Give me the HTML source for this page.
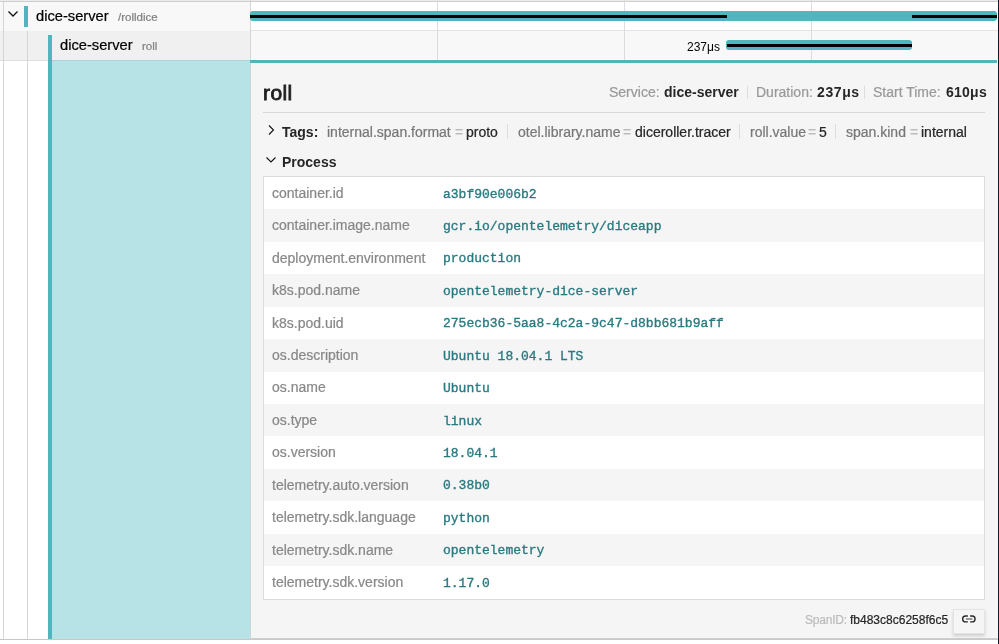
<!DOCTYPE html>
<html><head><meta charset="utf-8"><style>
html,body{margin:0;padding:0;}
body{width:999px;height:644px;position:relative;overflow:hidden;background:#fff;font-family:'Liberation Sans', sans-serif;}
.r{position:absolute;}
.t{position:absolute;white-space:nowrap;line-height:1;will-change:transform;}
.lab{color:#999;}
.sep{display:inline-block;width:1px;height:14px;background:#ddd;margin:0 8px;vertical-align:-2px;}
.ti{margin-left:9.8px;padding-right:8px;border-right:1px solid #ddd;}
.ti.last{border-right:none;padding-right:0;}
.tk{color:#777;}
.td{color:#bbb;padding:0 2.8px;}
</style></head><body>
<div class="r" style="left:0px;top:0px;width:998px;height:1px;background:#ebebeb;"></div>
<div class="r" style="left:0px;top:1px;width:998px;height:1px;background:#cfcfcf;"></div>
<div class="r" style="left:0px;top:2px;width:250px;height:29px;background:#f8f8f8;"></div>
<div class="r" style="left:251px;top:2px;width:747px;height:28px;background:#ffffff;"></div>
<div class="r" style="left:251px;top:30px;width:747px;height:1px;background:#e2e2e2;"></div>
<div class="r" style="left:0px;top:31px;width:250px;height:29px;background:#f0f0f0;"></div>
<div class="r" style="left:251px;top:31px;width:747px;height:28px;background:#f8f8f8;"></div>
<div class="r" style="left:251px;top:59px;width:747px;height:1px;background:#ffffff;"></div>
<div class="r" style="left:0px;top:60px;width:48px;height:579px;background:#ffffff;"></div>
<div class="r" style="left:52px;top:60px;width:198px;height:579px;background:#b8e3e6;"></div>
<div class="r" style="left:0px;top:60px;width:48px;height:1px;background:#dedede;"></div>
<div class="r" style="left:52px;top:60px;width:198px;height:1px;background:#a9d3d7;"></div>
<div class="r" style="left:3px;top:2px;width:1px;height:637px;background:#d6d6d6;"></div>
<div class="r" style="left:27px;top:31px;width:1px;height:608px;background:#d6d6d6;"></div>
<div class="r" style="left:250px;top:0px;width:1px;height:60px;background:#d6d6d6;"></div>
<div class="r" style="left:437px;top:0px;width:1px;height:60px;background:#dcdcdc;"></div>
<div class="r" style="left:624px;top:0px;width:1px;height:60px;background:#dcdcdc;"></div>
<div class="r" style="left:811px;top:0px;width:1px;height:60px;background:#dcdcdc;"></div>
<div class="r" style="left:24px;top:6px;width:4px;height:21px;background:#52b4bd;"></div>
<div class="r" style="left:48px;top:35px;width:4px;height:604px;background:#52b4bd;"></div>
<div class="r" style="left:250px;top:11px;width:747px;height:10px;background:#52b4bd;border-radius:3px;"></div>
<div class="r" style="left:250px;top:15px;width:477px;height:3px;background:#000;"></div>
<div class="r" style="left:912px;top:15px;width:85px;height:3px;background:#000;"></div>
<div class="r" style="left:726px;top:40px;width:186px;height:10px;background:#52b4bd;border-radius:3px;"></div>
<div class="r" style="left:727px;top:44px;width:185px;height:3px;background:#000;"></div>
<svg class="r" style="left:7px;top:9px" width="12" height="10" viewBox="0 0 12 10"><path d="M1.5 2.5 L6 7 L10.5 2.5" fill="none" stroke="#111" stroke-width="1.3"/></svg>
<div class="t" style="left:36.3px;top:9.46px;font-size:14.7px;color:#000;font-weight:normal;font-family:'Liberation Sans', sans-serif;-webkit-text-stroke:0.22px #000;">dice-server</div>
<div class="t" style="left:118px;top:12.17px;font-size:11.5px;color:#808080;font-weight:normal;font-family:'Liberation Sans', sans-serif;-webkit-text-stroke:0.22px #808080;">/rolldice</div>
<div class="t" style="left:60.1px;top:38.16px;font-size:14.7px;color:#000;font-weight:normal;font-family:'Liberation Sans', sans-serif;-webkit-text-stroke:0.22px #000;">dice-server</div>
<div class="t" style="left:141.5px;top:40.87px;font-size:11.5px;color:#808080;font-weight:normal;font-family:'Liberation Sans', sans-serif;-webkit-text-stroke:0.22px #808080;">roll</div>
<div class="t" style="right:279px;top:40.84px;font-size:12px;color:#000;font-weight:normal;">237μs</div>
<div class="r" style="left:250px;top:60px;width:747px;height:579px;background:#f5f5f5;"></div>
<div class="r" style="left:250px;top:60px;width:747px;height:3px;background:#52b4bd;"></div>
<div class="r" style="left:250px;top:63px;width:1px;height:576px;background:#d3d3d3;"></div>
<div class="r" style="left:997px;top:60px;width:1px;height:579px;background:#f7f7f7;"></div>
<div class="r" style="left:250px;top:638px;width:747px;height:1px;background:#cfcfcf;"></div>
<div class="r" style="left:0px;top:639px;width:998px;height:1px;background:#c8c8c8;"></div>
<div class="r" style="left:998px;top:0px;width:1px;height:644px;background:#10182a;"></div>
<div class="t" style="left:262.8px;top:82.22px;font-size:21px;color:#1f1f1f;font-weight:normal;font-family:'Liberation Sans', sans-serif;-webkit-text-stroke:0.85px #1f1f1f;letter-spacing:0.4px;">roll</div>
<div class="t" style="left:609px;top:84.55px;font-size:14px;color:#999;font-weight:normal;font-family:'Liberation Sans', sans-serif;-webkit-text-stroke:0.22px #999;">Service:</div>
<div class="t" style="left:664px;top:84.55px;font-size:14px;color:#262626;font-weight:bold;font-family:'Liberation Sans', sans-serif;">dice-server</div>
<div class="r" style="left:747px;top:86px;width:1px;height:13px;background:#dddddd;"></div>
<div class="t" style="left:756px;top:84.55px;font-size:14px;color:#999;font-weight:normal;font-family:'Liberation Sans', sans-serif;-webkit-text-stroke:0.22px #999;">Duration:</div>
<div class="t" style="left:817px;top:84.55px;font-size:14px;color:#262626;font-weight:bold;font-family:'Liberation Sans', sans-serif;letter-spacing:0.6px;">237μs</div>
<div class="r" style="left:864px;top:86px;width:1px;height:13px;background:#dddddd;"></div>
<div class="t" style="left:873px;top:84.55px;font-size:14px;color:#999;font-weight:normal;font-family:'Liberation Sans', sans-serif;-webkit-text-stroke:0.22px #999;">Start Time:</div>
<div class="t" style="left:946px;top:84.55px;font-size:14px;color:#262626;font-weight:bold;font-family:'Liberation Sans', sans-serif;letter-spacing:0.25px;">610μs</div>
<div class="r" style="left:263px;top:112px;width:722px;height:1px;background:#d8d8d8;"></div>
<svg class="r" style="left:266px;top:124px" width="10" height="12" viewBox="0 0 10 12"><path d="M3 1.5 L7.5 6 L3 10.5" fill="none" stroke="#111" stroke-width="1.1"/></svg>
<div class="t" style="left:282.4px;top:124.75px;font-size:14px;color:#262626;font-weight:bold;font-family:'Liberation Sans', sans-serif;">Tags:</div>
<div class="t" style="left:326.5px;top:124.75px;font-size:14px;color:#777;font-weight:normal;font-family:'Liberation Sans', sans-serif;-webkit-text-stroke:0.22px #777;">internal.span.format</div>
<div class="t" style="left:454.7px;top:124.75px;font-size:14px;color:#bbb;font-weight:normal;font-family:'Liberation Sans', sans-serif;-webkit-text-stroke:0.22px #bbb;">=</div>
<div class="t" style="left:465.5px;top:124.75px;font-size:14px;color:#262626;font-weight:normal;font-family:'Liberation Sans', sans-serif;-webkit-text-stroke:0.22px #262626;">proto</div>
<div class="t" style="left:518px;top:124.75px;font-size:14px;color:#777;font-weight:normal;font-family:'Liberation Sans', sans-serif;-webkit-text-stroke:0.22px #777;">otel.library.name</div>
<div class="t" style="left:623px;top:124.75px;font-size:14px;color:#bbb;font-weight:normal;font-family:'Liberation Sans', sans-serif;-webkit-text-stroke:0.22px #bbb;">=</div>
<div class="t" style="left:635px;top:124.75px;font-size:14px;color:#262626;font-weight:normal;font-family:'Liberation Sans', sans-serif;-webkit-text-stroke:0.22px #262626;">diceroller.tracer</div>
<div class="t" style="left:749.7px;top:124.75px;font-size:14px;color:#777;font-weight:normal;font-family:'Liberation Sans', sans-serif;-webkit-text-stroke:0.22px #777;">roll.value</div>
<div class="t" style="left:808px;top:124.75px;font-size:14px;color:#bbb;font-weight:normal;font-family:'Liberation Sans', sans-serif;-webkit-text-stroke:0.22px #bbb;">=</div>
<div class="t" style="left:818.8px;top:124.75px;font-size:14px;color:#262626;font-weight:normal;font-family:'Liberation Sans', sans-serif;-webkit-text-stroke:0.22px #262626;">5</div>
<div class="t" style="left:846.4px;top:124.75px;font-size:14px;color:#777;font-weight:normal;font-family:'Liberation Sans', sans-serif;-webkit-text-stroke:0.22px #777;">span.kind</div>
<div class="t" style="left:910px;top:124.75px;font-size:14px;color:#bbb;font-weight:normal;font-family:'Liberation Sans', sans-serif;-webkit-text-stroke:0.22px #bbb;">=</div>
<div class="t" style="left:920.6px;top:124.75px;font-size:14px;color:#262626;font-weight:normal;font-family:'Liberation Sans', sans-serif;-webkit-text-stroke:0.22px #262626;">internal</div>
<div class="r" style="left:507px;top:124px;width:1px;height:15px;background:#dddddd;"></div>
<div class="r" style="left:739px;top:124px;width:1px;height:15px;background:#dddddd;"></div>
<div class="r" style="left:835px;top:124px;width:1px;height:15px;background:#dddddd;"></div>
<svg class="r" style="left:265px;top:155px" width="12" height="10" viewBox="0 0 12 10"><path d="M1.5 2.5 L6 7 L10.5 2.5" fill="none" stroke="#111" stroke-width="1.1"/></svg>
<div class="t" style="left:282.3px;top:154.95px;font-size:14px;color:#262626;font-weight:bold;font-family:'Liberation Sans', sans-serif;">Process</div>
<div class="r" style="left:263px;top:176px;width:722px;height:424px;background:#ffffff;box-sizing:border-box;border:1px solid #dcdcdc;"></div>
<div class="t" style="left:271.5px;top:185.95px;font-size:14px;color:#888;font-weight:normal;font-family:'Liberation Sans', sans-serif;-webkit-text-stroke:0.22px #888;">container.id</div>
<div class="t" style="left:442.5px;top:187.64px;font-size:13px;color:#2a7a80;font-weight:normal;font-family:'Liberation Mono', monospace;-webkit-text-stroke:0.35px #2a7a80;">a3bf90e006b2</div>
<div class="r" style="left:264px;top:209.420px;width:720px;height:32.42px;background:#f5f5f5"></div>
<div class="t" style="left:271.5px;top:218.37px;font-size:14px;color:#888;font-weight:normal;font-family:'Liberation Sans', sans-serif;-webkit-text-stroke:0.22px #888;">container.image.name</div>
<div class="t" style="left:442.5px;top:220.06px;font-size:13px;color:#2a7a80;font-weight:normal;font-family:'Liberation Mono', monospace;-webkit-text-stroke:0.35px #2a7a80;">gcr.io/opentelemetry/diceapp</div>
<div class="t" style="left:271.5px;top:250.79px;font-size:14px;color:#888;font-weight:normal;font-family:'Liberation Sans', sans-serif;-webkit-text-stroke:0.22px #888;">deployment.environment</div>
<div class="t" style="left:442.5px;top:252.48px;font-size:13px;color:#2a7a80;font-weight:normal;font-family:'Liberation Mono', monospace;-webkit-text-stroke:0.35px #2a7a80;">production</div>
<div class="r" style="left:264px;top:274.260px;width:720px;height:32.42px;background:#f5f5f5"></div>
<div class="t" style="left:271.5px;top:283.21px;font-size:14px;color:#888;font-weight:normal;font-family:'Liberation Sans', sans-serif;-webkit-text-stroke:0.22px #888;">k8s.pod.name</div>
<div class="t" style="left:442.5px;top:284.90px;font-size:13px;color:#2a7a80;font-weight:normal;font-family:'Liberation Mono', monospace;-webkit-text-stroke:0.35px #2a7a80;">opentelemetry-dice-server</div>
<div class="t" style="left:271.5px;top:315.63px;font-size:14px;color:#888;font-weight:normal;font-family:'Liberation Sans', sans-serif;-webkit-text-stroke:0.22px #888;">k8s.pod.uid</div>
<div class="t" style="left:442.5px;top:317.32px;font-size:13px;color:#2a7a80;font-weight:normal;font-family:'Liberation Mono', monospace;-webkit-text-stroke:0.35px #2a7a80;">275ecb36-5aa8-4c2a-9c47-d8bb681b9aff</div>
<div class="r" style="left:264px;top:339.100px;width:720px;height:32.42px;background:#f5f5f5"></div>
<div class="t" style="left:271.5px;top:348.05px;font-size:14px;color:#888;font-weight:normal;font-family:'Liberation Sans', sans-serif;-webkit-text-stroke:0.22px #888;">os.description</div>
<div class="t" style="left:442.5px;top:349.74px;font-size:13px;color:#2a7a80;font-weight:normal;font-family:'Liberation Mono', monospace;-webkit-text-stroke:0.35px #2a7a80;">Ubuntu 18.04.1 LTS</div>
<div class="t" style="left:271.5px;top:380.47px;font-size:14px;color:#888;font-weight:normal;font-family:'Liberation Sans', sans-serif;-webkit-text-stroke:0.22px #888;">os.name</div>
<div class="t" style="left:442.5px;top:382.16px;font-size:13px;color:#2a7a80;font-weight:normal;font-family:'Liberation Mono', monospace;-webkit-text-stroke:0.35px #2a7a80;">Ubuntu</div>
<div class="r" style="left:264px;top:403.940px;width:720px;height:32.42px;background:#f5f5f5"></div>
<div class="t" style="left:271.5px;top:412.89px;font-size:14px;color:#888;font-weight:normal;font-family:'Liberation Sans', sans-serif;-webkit-text-stroke:0.22px #888;">os.type</div>
<div class="t" style="left:442.5px;top:414.58px;font-size:13px;color:#2a7a80;font-weight:normal;font-family:'Liberation Mono', monospace;-webkit-text-stroke:0.35px #2a7a80;">linux</div>
<div class="t" style="left:271.5px;top:445.31px;font-size:14px;color:#888;font-weight:normal;font-family:'Liberation Sans', sans-serif;-webkit-text-stroke:0.22px #888;">os.version</div>
<div class="t" style="left:442.5px;top:447.00px;font-size:13px;color:#2a7a80;font-weight:normal;font-family:'Liberation Mono', monospace;-webkit-text-stroke:0.35px #2a7a80;">18.04.1</div>
<div class="r" style="left:264px;top:468.780px;width:720px;height:32.42px;background:#f5f5f5"></div>
<div class="t" style="left:271.5px;top:477.73px;font-size:14px;color:#888;font-weight:normal;font-family:'Liberation Sans', sans-serif;-webkit-text-stroke:0.22px #888;">telemetry.auto.version</div>
<div class="t" style="left:442.5px;top:479.42px;font-size:13px;color:#2a7a80;font-weight:normal;font-family:'Liberation Mono', monospace;-webkit-text-stroke:0.35px #2a7a80;">0.38b0</div>
<div class="t" style="left:271.5px;top:510.15px;font-size:14px;color:#888;font-weight:normal;font-family:'Liberation Sans', sans-serif;-webkit-text-stroke:0.22px #888;">telemetry.sdk.language</div>
<div class="t" style="left:442.5px;top:511.84px;font-size:13px;color:#2a7a80;font-weight:normal;font-family:'Liberation Mono', monospace;-webkit-text-stroke:0.35px #2a7a80;">python</div>
<div class="r" style="left:264px;top:533.620px;width:720px;height:32.42px;background:#f5f5f5"></div>
<div class="t" style="left:271.5px;top:542.57px;font-size:14px;color:#888;font-weight:normal;font-family:'Liberation Sans', sans-serif;-webkit-text-stroke:0.22px #888;">telemetry.sdk.name</div>
<div class="t" style="left:442.5px;top:544.26px;font-size:13px;color:#2a7a80;font-weight:normal;font-family:'Liberation Mono', monospace;-webkit-text-stroke:0.35px #2a7a80;">opentelemetry</div>
<div class="t" style="left:271.5px;top:574.99px;font-size:14px;color:#888;font-weight:normal;font-family:'Liberation Sans', sans-serif;-webkit-text-stroke:0.22px #888;">telemetry.sdk.version</div>
<div class="t" style="left:442.5px;top:576.68px;font-size:13px;color:#2a7a80;font-weight:normal;font-family:'Liberation Mono', monospace;-webkit-text-stroke:0.35px #2a7a80;">1.17.0</div>
<div class="t" style="left:804.6px;top:613.84px;font-size:12px;color:#bbb;font-weight:normal;font-family:'Liberation Sans', sans-serif;-webkit-text-stroke:0.22px #bbb;letter-spacing:-0.2px;">SpanID:</div>
<div class="t" style="left:850px;top:613.84px;font-size:12px;color:#262626;font-weight:normal;font-family:'Liberation Sans', sans-serif;-webkit-text-stroke:0.22px #262626;">fb483c8c6258f6c5</div>
<div class="r" style="left:953px;top:609px;width:32px;height:25px;background:#f5f5f5;box-sizing:border-box;border:1px solid #e4e4e4;box-shadow:0 2px 3px rgba(0,0,0,0.16);"></div>
<svg class="r" style="left:960px;top:612px" width="18" height="14" viewBox="0 0 18 14"><path d="M7.9 3.95 H5.6 A2.95 2.95 0 0 0 5.6 9.85 H7.9 M10.1 3.95 H12.1 A2.95 2.95 0 0 1 12.1 9.85 H10.1" fill="none" stroke="#2a2a2a" stroke-width="1.4"/><path d="M5.9 7 H12.4" stroke="#666" stroke-width="1.3"/></svg>
</body></html>
